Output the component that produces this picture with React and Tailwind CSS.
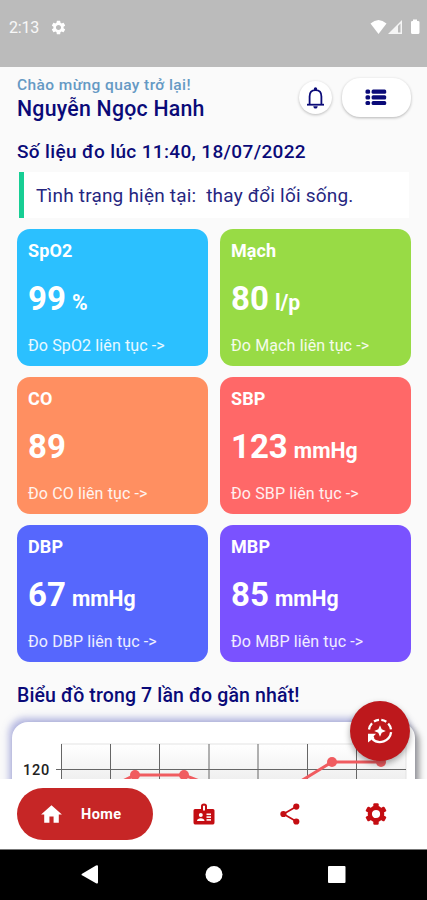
import React from 'react';
import { MdHome, MdSettings } from 'react-icons/md';

const metrics = [
  { name: 'SpO2', value: '99', unit: '%', bg: 'bg-[#2bc0ff]' },
  { name: 'Mạch', value: '80', unit: 'l/p', bg: 'bg-[#98db45]' },
  { name: 'CO', value: '89', unit: '', bg: 'bg-[#ff8f61]' },
  { name: 'SBP', value: '123', unit: 'mmHg', bg: 'bg-[#ff6868]' },
  { name: 'DBP', value: '67', unit: 'mmHg', bg: 'bg-[#5667fd]' },
  { name: 'MBP', value: '85', unit: 'mmHg', bg: 'bg-[#7a52ff]' },
];

const StatusBar = () => (
  <div className="flex h-[67px] shrink-0 items-start justify-between bg-[#bbbbbb] pl-[9px] pr-[7px] pt-[18px] text-white">
    <div className="flex h-5 items-center gap-[11px]">
      <span className="text-[16px] leading-5 tracking-[-0.2px] text-white/90">2:13</span>
      <MdSettings className="-mt-px h-[17px] w-[17px]" />
    </div>
    <svg width="50" height="16" viewBox="0 0 50 16" className="mt-px" fill="currentColor">
      <path d="M0.5 4.5Q8.5-2.5 16.5 4.5L8.5 15Z" />
      <path d="M18 15L32 1V15Z" opacity="0.85" />
      <path d="M28 7L30.5 4.5V13.5H28Z" fill="#bbbbbb" />
      <path d="M41 3Q41 2 42.5 2H43V0.5H47V2H48Q49.5 2 49.5 3V13.5Q49.5 15 48 15H42.5Q41 15 41 13.5Z" />
    </svg>
  </div>
);

const BellIcon = () => (
  <svg width="19" height="22" viewBox="0 0 19 22" fill="none" stroke="#0a0a78" strokeWidth="1.8">
    <circle cx="9.5" cy="1.9" r="1.7" fill="#0a0a78" stroke="none" />
    <path d="M3.6 17V9.5C3.6 5.5 6 3.2 9.5 3.2S15.4 5.5 15.4 9.5V17" />
    <path d="M1 17.7H18" />
    <path d="M7.3 19.2H11.7C11.5 20.7 10.7 21.5 9.5 21.5S7.5 20.7 7.3 19.2Z" fill="#0a0a78" stroke="none" />
  </svg>
);

const ListIcon = () => (
  <svg width="22" height="17" viewBox="0 0 22 17" fill="#0a0a78">
    {[0.5, 6.2, 11.9].map(y => (
      <g key={y}>
        <rect x="0.5" y={y} width="4.6" height="4.2" rx="1.5" />
        <rect x="6.6" y={y} width="14.6" height="4.2" rx="1.5" />
      </g>
    ))}
  </svg>
);

const BadgeIcon = () => (
  <svg width="22" height="22" viewBox="0 0 22 22" fill="#c40d12">
    <path
      fillRule="evenodd"
      d="M2 6H8V3Q8 0.5 11 0.5Q14 0.5 14 3V6H20Q21.5 6 21.5 7.5V19.5Q21.5 21.5 20 21.5H2Q0.5 21.5 0.5 19.5V7.5Q0.5 6 2 6ZM10 2.8V7.5H12V2.8Z"
    />
    <g fill="#fff">
      <circle cx="7.8" cy="12" r="2" />
      <path d="M4 18C4 14.2 11.5 14.2 11.5 18Z" />
      <rect x="13.5" y="10.5" width="4.5" height="1.6" />
      <rect x="13.5" y="13.3" width="4.5" height="1.6" />
      <rect x="13.5" y="16.1" width="4.5" height="1.6" />
    </g>
  </svg>
);

const ShareIcon = () => (
  <svg width="22" height="22" viewBox="0 0 22 22" fill="#c40d12">
    <path d="M17.5 3.5L4.5 11L17.5 18.6" fill="none" stroke="#c40d12" strokeWidth="1.7" />
    <circle cx="17.3" cy="3.6" r="3.1" />
    <circle cx="4.4" cy="11" r="3.1" />
    <circle cx="17.3" cy="18.5" r="3.1" />
  </svg>
);

const GearIcon = () => (
  <svg width="22" height="22" viewBox="0 0 22 22" fill="#c40d12">
    <circle cx="11" cy="11" r="6.2" fill="none" stroke="#c40d12" strokeWidth="4.2" />
    {[0, 60, 120, 180, 240, 300].map(angle => (
      <rect key={angle} x="8.3" y="0.2" width="5.4" height="5.5" rx="1.2" transform={`rotate(${angle} 11 11)`} />
    ))}
  </svg>
);

const ScanIcon = () => (
  <svg width="26" height="26" viewBox="0 0 26 26" fill="none" stroke="#fff" strokeWidth="2.3">
    <path d="M2 11.5A11.2 11.2 0 0 1 5 5.2" />
    <path d="M7 3.5A11.2 11.2 0 0 1 12 1.8" />
    <path d="M14.3 1.8A11.2 11.2 0 0 1 19.3 3.7" />
    <path d="M21.2 5.4A11.2 11.2 0 0 1 24 11.3" />
    <path d="M24.1 14.2A11.2 11.2 0 0 1 5.2 20.8" />
    <path d="M1 15.8H9L6.600 18.200L7.500 20.500L4.800 21.400L1 24.500Z" fill="#fff" stroke="none" />
    <path d="M13 7.2L14.7 11.3L18.8 13L14.7 14.7L13 18.8L11.3 14.7L7.2 13L11.3 11.3Z" fill="#fff" stroke="none" />
  </svg>
);

const Header = () => (
  <header className="flex h-[65px] shrink-0 justify-between pl-[17px] pr-4">
    <div className="pt-[8px]">
      <p className="text-[15.5px] font-medium leading-[20px] tracking-[0.4px] text-[#6599c4]">
        Chào mừng quay trở lại!
      </p>
      <h1 className="text-[21.3px] font-medium leading-[27px] tracking-[0.24px] text-[#0a0a78]">
        Nguyễn Ngọc Hanh
      </h1>
    </div>
    <div className="flex items-start gap-[10px] pt-[11px]">
      <button className="mt-[3px] flex h-[33px] w-[33px] items-center justify-center rounded-full bg-white shadow-[0_1px_3px_rgba(0,0,0,0.25)]">
        <BellIcon />
      </button>
      <button className="flex h-[39px] w-[69px] items-center justify-center rounded-[18px] bg-white pr-px shadow-[0_1px_3px_rgba(0,0,0,0.28)]">
        <ListIcon />
      </button>
    </div>
  </header>
);

const MetricCard = ({ name, value, unit, bg }) => (
  <div className={`flex h-[137px] flex-col rounded-[13px] pl-[11px] pt-[11px] text-white ${bg}`}>
    <h3 className="text-[18px] font-bold leading-[22px] tracking-[0.1px]">{name}</h3>
    <p className="mt-[15px] whitespace-nowrap leading-[44px]">
      <span className="text-[33px] font-bold">{value}</span>
      <span className="ml-[6px] text-[21.2px] font-bold">{unit}</span>
    </p>
    <p className="mt-[8px] text-[16px] leading-[22px] tracking-[0.12px] text-white/90">
      Đo {name} liên tục -&gt;
    </p>
  </div>
);

const Chart = () => (
  <div className="mx-[12px] mt-[14px] h-[120px] shrink-0 rounded-[16px] bg-white shadow-[-3px_-4px_7px_rgba(110,115,200,0.5),4px_4px_6px_rgba(0,0,0,0.4)]">
    <svg width="403" height="120" viewBox="12 722 403 120">
      <defs>
        <linearGradient id="plot" x1="0" y1="0" x2="0" y2="1">
          <stop offset="0" stopColor="#ffffff" />
          <stop offset="1" stopColor="#dcdcdc" />
        </linearGradient>
      </defs>
      <rect x="61" y="744" width="345" height="80" fill="url(#plot)" />
      <path d="M61 744H406V824" fill="none" stroke="#e3e3e3" />
      {[61.5, 110.5, 159.5, 209, 258, 307.5, 356.5].map(x => (
        <path key={x} d={`M${x} 744V824`} stroke="#666" />
      ))}
      <path d="M56 769.5H406" stroke="#666" />
      <text x="50" y="775" textAnchor="end" fontSize="14.5" fontWeight="500" letterSpacing="0.8" fill="#222">
        120
      </text>
      <path d="M86 799L135 775H184L233 794L283 792L332 762H381" fill="none" stroke="#f05c60" strokeWidth="3" />
      {[[135, 775], [184, 775], [332, 762], [381, 762]].map(([cx, cy]) => (
        <circle key={cx} cx={cx} cy={cy} r="5" fill="#f05c60" />
      ))}
    </svg>
  </div>
);

const BottomNav = () => (
  <nav className="flex h-[70px] shrink-0 items-center bg-white pl-[17px]">
    <button className="flex h-[52px] w-[136px] items-center rounded-full bg-[#c62626] pl-[22px] text-white">
      <MdHome className="h-[25px] w-[25px]" />
      <span className="ml-[17px] mt-px text-[14.5px] font-bold tracking-[0.4px]">Home</span>
    </button>
    <div className="ml-[8px] flex items-center">
      <button className="flex w-[86px] justify-center"><BadgeIcon /></button>
      <button className="flex w-[86px] justify-center"><ShareIcon /></button>
      <button className="flex w-[86px] justify-center"><GearIcon /></button>
    </div>
  </nav>
);

const SystemBar = () => (
  <div className="h-[51px] shrink-0 border-t border-[#777] bg-black">
    <svg width="427" height="50" viewBox="0 850 427 50" fill="#fff">
      <path d="M82.5 873.4L96 865.5Q98 864.6 98 866.5V882.3Q98 884.2 96 883.2L82.5 875.6Q80.5 874.5 82.5 873.4Z" />
      <circle cx="214" cy="874.5" r="8.5" />
      <rect x="328" y="866" width="17.5" height="17" rx="1" />
    </svg>
  </div>
);

export default function App() {
  return (
    <div className="relative flex h-[900px] w-[427px] flex-col overflow-hidden bg-[#fafafa] font-[Roboto,sans-serif]">
      <StatusBar />
      <main className="flex h-[712px] shrink-0 flex-col overflow-hidden">
        <Header />
        <h2 className="mt-[8px] pl-[17px] text-[19px] font-medium leading-6 tracking-[0.35px] text-[#0a0a78]">
          Số liệu đo lúc 11:40, 18/07/2022
        </h2>
        <div className="ml-[19px] mr-[18px] mt-[8px] flex h-[46px] shrink-0 items-center border-l-[5px] border-[#17ce94] bg-white pl-[12px] pt-px">
          <p className="whitespace-pre text-[19px] leading-6 tracking-[0.2px] text-[#26267f]">
            {'Tình trạng hiện tại:  thay đổi lối sống.'}
          </p>
        </div>
        <section className="mx-[17px] mt-[11px] grid grid-cols-[191px_191px] gap-x-[12px] gap-y-[11px]">
          {metrics.map(metric => (
            <MetricCard key={metric.name} {...metric} />
          ))}
        </section>
        <h2 className="mt-[22px] pl-[17px] text-[19.5px] font-medium leading-6 tracking-[0.13px] text-[#0a0a78]">
          Biểu đồ trong 7 lần đo gần nhất!
        </h2>
        <Chart />
      </main>
      <BottomNav />
      <SystemBar />

      {/* Floating measure button */}
      <button className="absolute left-[350px] top-[701px] flex h-[60px] w-[60px] items-center justify-center rounded-full bg-[#bd181c] shadow-[0_3px_6px_rgba(0,0,0,0.35)]">
        <ScanIcon />
      </button>
    </div>
  );
}
